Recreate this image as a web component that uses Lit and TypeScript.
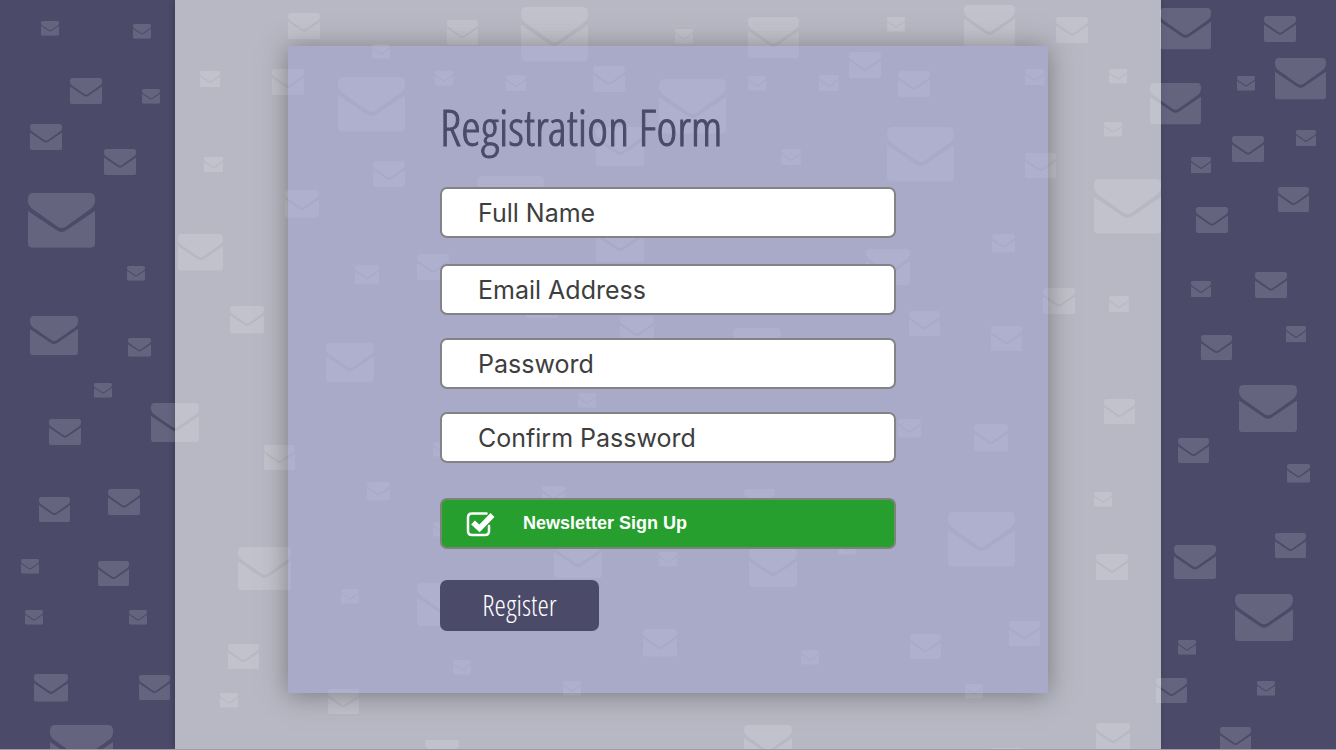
import { LitElement, html, css, svg } from "lit";
import { customElement, state } from "lit/decorators.js";

// Background envelopes: left, top, width.
const ENVELOPES: ReadonlyArray<readonly [number, number, number]> = [
  [41, 21, 18], [133, 24, 18], [70, 78, 32], [142, 89, 18], [30, 124, 32],
  [104, 149, 32], [28, 193, 67], [288, 13, 32], [200, 71, 20], [272, 69, 32],
  [204, 157, 19], [285, 190, 34], [178, 234, 45], [127, 266, 18], [30, 316, 48],
  [128, 338, 23], [94, 383, 18], [151, 403, 48], [49, 419, 32], [230, 306, 34],
  [264, 445, 31], [108, 489, 32], [39, 497, 31], [21, 559, 18], [98, 561, 31],
  [25, 610, 18], [129, 610, 18], [34, 674, 34], [139, 675, 31], [50, 725, 63],
  [238, 547, 53], [228, 644, 31], [220, 693, 18], [328, 689, 31], [372, 44, 18],
  [447, 20, 31], [521, 7, 67], [338, 77, 67], [435, 71, 18], [506, 75, 20],
  [593, 66, 32], [659, 79, 67], [596, 127, 48], [373, 161, 32], [477, 176, 67],
  [596, 223, 48], [355, 265, 24], [417, 254, 32], [326, 343, 48], [526, 292, 32],
  [620, 316, 34], [578, 393, 18], [433, 442, 18], [367, 482, 23], [542, 486, 23],
  [744, 489, 31], [433, 522, 18], [554, 539, 48], [341, 589, 18], [417, 583, 53],
  [453, 660, 18], [563, 681, 18], [643, 629, 34], [425, 740, 34], [659, 552, 18],
  [675, 29, 18], [748, 17, 51], [887, 17, 18], [964, 5, 51], [849, 52, 32],
  [898, 71, 32], [748, 76, 18], [819, 75, 20], [887, 127, 67], [781, 149, 20],
  [992, 234, 23], [866, 249, 44], [909, 311, 31], [733, 328, 48], [991, 326, 31],
  [898, 419, 23], [974, 424, 34], [948, 512, 67], [749, 548, 48], [838, 540, 18],
  [801, 650, 18], [910, 634, 31], [965, 684, 18], [744, 725, 48], [1056, 17, 32],
  [1025, 69, 20], [1109, 69, 18], [1104, 122, 18], [1150, 83, 51], [1160, 8, 51],
  [1264, 16, 32], [1237, 76, 18], [1275, 58, 51], [1232, 136, 32], [1296, 130, 20],
  [1191, 157, 20], [1025, 153, 31], [1094, 179, 67], [1278, 187, 31], [1196, 207, 32],
  [1043, 288, 32], [1109, 296, 20], [1191, 281, 20], [1255, 272, 32], [1286, 326, 20],
  [1201, 335, 31], [1104, 399, 31], [1239, 385, 58], [1178, 438, 31], [1287, 464, 23],
  [1094, 492, 18], [1096, 554, 32], [1174, 545, 42], [1275, 533, 31], [1235, 594, 58],
  [1009, 621, 31], [1178, 640, 18], [1257, 681, 18], [1156, 678, 31], [1096, 723, 34],
  [1220, 727, 31], [990, 748, 33],
];

@customElement("envelope-backdrop")
export class EnvelopeBackdrop extends LitElement {
  static styles = css`
    :host {
      display: block;
      overflow: hidden;
      pointer-events: none;
    }
    .canvas {
      display: block;
      width: 100%;
      height: 100%;
      fill: #fff;
      fill-opacity: 0.14;
    }
  `;

  render() {
    return html`
      <svg class="canvas" viewBox="0 0 1336 750" preserveAspectRatio="xMidYMin slice" aria-hidden="true">
        <defs>
          <symbol id="envelope" viewBox="0 0 201 164">
            <path d="M16 0H185Q201 0 201 17V22C201 36 194 43 186 49L113 101Q101 109 89 101L15 49C7 43 0 36 0 22V17Q0 0 16 0Z" />
            <path d="M0 54L86 112Q101 122 115 112L201 54V151Q201 164 188 164H13Q0 164 0 151Z" />
          </symbol>
        </defs>
        ${ENVELOPES.map(
          ([x, y, w]) => svg`<use href="#envelope" x=${x} y=${y} width=${w} height=${(w * 164) / 201} />`
        )}
      </svg>
    `;
  }
}

@customElement("app-root")
export class AppRoot extends LitElement {
  @state() private newsletter = true;

  static styles = css`
    :host {
      display: block;
      font-family: "Liberation Sans", Arial, sans-serif;
    }
    *,
    *::before {
      box-sizing: border-box;
    }
    .page {
      position: relative;
      min-height: 100vh;
      display: flex;
      justify-content: center;
      background: #4b4b69;
      border-bottom: 1px solid #9c9cab;
      overflow: hidden;
    }
    .sheet {
      flex: 0 1 986px;
      display: flex;
      justify-content: center;
      align-items: flex-start;
      padding: 46px 24px 56px;
      background: #b8b8c4;
      box-shadow: -1px 0 6px rgba(0, 0, 0, 0.22);
    }
    .backdrop {
      position: absolute;
      inset: 0;
    }
    /* Tinted glass: the envelopes stay faintly visible through it. */
    .panel {
      position: relative;
      flex: 0 1 760px;
      padding: 48px 152px 62px;
      background: rgba(139, 142, 208, 0.35);
      box-shadow: 0 2px 24px rgba(60, 60, 60, 0.5);
    }
    .form {
      display: flex;
      flex-direction: column;
      gap: 23px;
    }
    .title {
      margin: 0 0 4px;
      font-family: "Open Sans Condensed Light", "Open Sans Condensed", "Roboto Condensed", Lato, sans-serif;
      font-size: 50px;
      line-height: 66px;
      font-weight: 300;
      color: #4b4b69;
      -webkit-text-stroke: 1px #4b4b69;
      white-space: nowrap;
    }
    .field {
      width: 100%;
      height: 51px;
      padding: 0 36px;
      border: 2px solid #838387;
      border-radius: 7px;
      background: #fff;
      color: #3e3e3f;
      font-family: Inter, "Liberation Sans", sans-serif;
      font-size: 25px;
      outline: none;
    }
    .field::placeholder {
      color: #3e3e3f;
      opacity: 1;
    }
    .field-first {
      margin-bottom: 3px;
    }
    .field-last {
      margin-bottom: 12px;
    }
    .newsletter {
      position: relative;
      display: flex;
      align-items: center;
      gap: 28px;
      height: 51px;
      margin-bottom: 8px;
      padding: 0 24px;
      border: 2px solid #7b8577;
      border-radius: 7px;
      background: #269f2f;
      color: #fff;
      font-size: 18px;
      font-weight: 700;
      cursor: pointer;
    }
    .box {
      position: absolute;
      inset: 0;
      width: 100%;
      height: 100%;
      margin: 0;
      opacity: 0;
      cursor: pointer;
    }
    .tick {
      flex: none;
      width: 29px;
      height: 26px;
    }
    .register {
      align-self: flex-start;
      width: 159px;
      height: 51px;
      padding: 0 0 2px;
      border: 0;
      border-radius: 7px;
      background: #4b4b69;
      color: #fff;
      font-family: "Open Sans Condensed Light", "Open Sans Condensed", "Roboto Condensed", Lato, sans-serif;
      font-size: 29px;
      font-weight: 300;
      cursor: pointer;
    }
  `;

  private toggle(e: Event) {
    this.newsletter = (e.target as HTMLInputElement).checked;
  }

  render() {
    return html`
      <div class="page">
        <main class="sheet">
          <envelope-backdrop class="backdrop"></envelope-backdrop>
          <section class="panel">
            <form class="form" @submit=${(e: Event) => e.preventDefault()}>
              <h1 class="title">Registration Form</h1>
              <input class="field field-first" type="text" placeholder="Full Name" aria-label="Full Name" />
              <input class="field" type="email" placeholder="Email Address" aria-label="Email Address" />
              <input class="field" type="password" placeholder="Password" aria-label="Password" />
              <input class="field field-last" type="password" placeholder="Confirm Password" aria-label="Confirm Password" />
              <label class="newsletter">
                <input class="box" type="checkbox" .checked=${this.newsletter} @change=${this.toggle} />
                <svg class="tick" viewBox="0 0 29 26" fill="none" stroke="#fff" aria-hidden="true">
                  <path d="M20.500 2.500H6Q2 2.500 2 6.500V20Q2 24 6 24H19Q23 24 23 20V15" stroke-width="2.500" stroke-linecap="round" />
                  ${this.newsletter
                    ? svg`<path d="M7 11.500L13.500 17.500L26.500 4" stroke-width="5.500" stroke-linejoin="miter" stroke-linecap="butt" />`
                    : null}
                </svg>
                <span>Newsletter Sign Up</span>
              </label>
              <button class="register" type="submit">Register</button>
            </form>
          </section>
        </main>
      </div>
    `;
  }
}
